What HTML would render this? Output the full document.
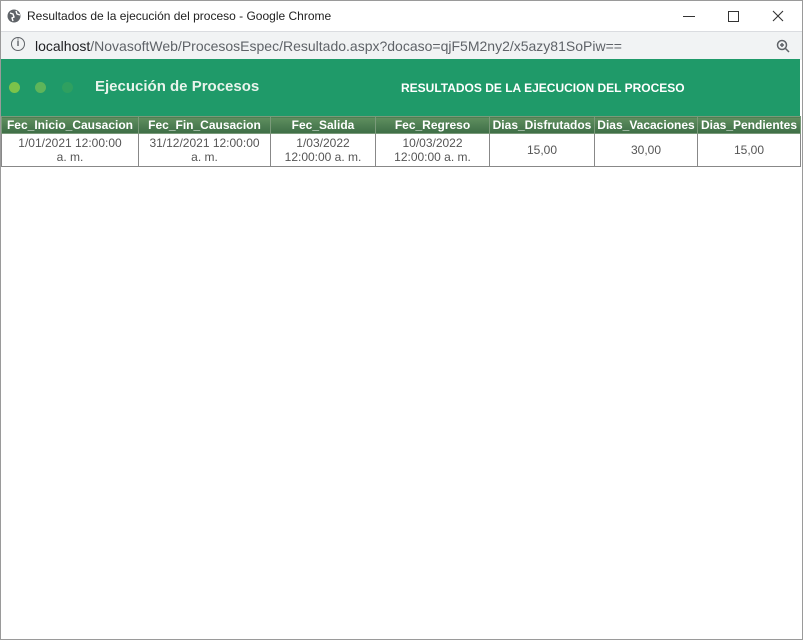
<!DOCTYPE html>
<html><head><style>
body{margin:0;width:803px;height:640px;background:#fff;font-family:"Liberation Sans",sans-serif;position:relative;overflow:hidden}
.frame{position:absolute;left:0;top:0;width:801px;height:638px;border:1px solid #9a9a9a}
.title{position:absolute;left:1px;top:1px;width:801px;height:30px;background:#fff;font-size:12px;color:#222}
.addr{position:absolute;left:1px;top:31px;width:801px;height:28px;background:#f1f3f4;border-top:1px solid #dadce0;font-size:14px;color:#5f6368}
.banner{position:absolute;left:1px;top:59px;width:799px;height:57px;background:#1f9a69}
table{position:absolute;left:1px;top:116px;border-collapse:collapse;font-size:12px}
th{height:16px;padding:0;color:#fff;font-weight:bold;background:linear-gradient(#5f8f5f,#3e6e46);border:1px solid #7a9a7a;white-space:nowrap}
td{height:32px;padding:0;color:#555;text-align:center;border:1px solid #888;line-height:14px;font-size:12px}
</style></head><body>
<div class="frame"></div>
<div class="title">
<svg style="position:absolute;left:6px;top:8px" width="14" height="14" viewBox="0 0 14 14"><circle cx="7" cy="7" r="6.5" fill="#5f6368"/><path d="M3 4l3 1 1 3-2 1 1 3M9 2l1 3 3 1" stroke="#fff" stroke-width="1.4" fill="none"/></svg>
<span style="position:absolute;left:26px;top:8px">Resultados de la ejecución del proceso - Google Chrome</span>
<span style="position:absolute;left:682px;top:15px;width:12px;height:1px;background:#333"></span>
<span style="position:absolute;left:727px;top:10px;width:9px;height:9px;border:1px solid #333"></span>
<svg style="position:absolute;left:771px;top:9px" width="12" height="12" viewBox="0 0 12 12"><path d="M1 1L11 11M11 1L1 11" stroke="#333" stroke-width="1.1"/></svg>
</div>
<div class="addr">
<span style="position:absolute;left:10px;top:5px;width:12px;height:12px;border:1.3px solid #5f6368;border-radius:50%;font-size:10px;text-align:center;line-height:12px;font-weight:bold">i</span>
<span style="position:absolute;left:34px;top:6px"><span style="color:#202124">localhost</span>/NovasoftWeb/ProcesosEspec/Resultado.aspx?docaso=qjF5M2ny2/x5azy81SoPiw==</span>
<svg style="position:absolute;left:775px;top:7px" width="15" height="15" viewBox="0 0 15 15"><circle cx="6" cy="6" r="4.5" stroke="#5f6368" stroke-width="1.5" fill="none"/><path d="M9.5 9.5L13 13M4 6h4M6 4v4" stroke="#5f6368" stroke-width="1.5"/></svg>
</div>
<div class="banner">
<span style="position:absolute;left:8px;top:23px;width:11px;height:11px;border-radius:50%;background:#7cc34a"></span>
<span style="position:absolute;left:34px;top:23px;width:11px;height:11px;border-radius:50%;background:#5eb55a"></span>
<span style="position:absolute;left:61px;top:23px;width:11px;height:11px;border-radius:50%;background:#2fa060"></span>
<span style="position:absolute;left:94px;top:19px;color:#e8f4ec;font-weight:bold;font-size:15px">Ejecución de Procesos</span>
<span style="position:absolute;left:400px;top:22px;color:#fff;font-weight:bold;font-size:12px">RESULTADOS DE LA EJECUCION DEL PROCESO</span>
</div>
<table>
<tr><th style="width:136px">Fec_Inicio_Causacion</th><th style="width:131px">Fec_Fin_Causacion</th><th style="width:104px">Fec_Salida</th><th style="width:113px">Fec_Regreso</th><th style="width:104px">Dias_Disfrutados</th><th style="width:102px">Dias_Vacaciones</th><th style="width:102px">Dias_Pendientes</th></tr>
<tr><td>1/01/2021 12:00:00<br>a. m.</td><td>31/12/2021 12:00:00<br>a. m.</td><td>1/03/2022<br>12:00:00 a. m.</td><td>10/03/2022<br>12:00:00 a. m.</td><td>15,00</td><td>30,00</td><td>15,00</td></tr>
</table>
</body></html>
